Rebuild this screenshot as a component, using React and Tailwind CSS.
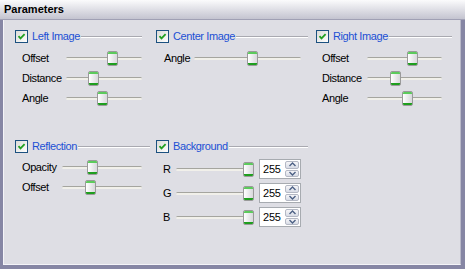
import React from "react";

const F = "font-['Liberation_Sans',Arial,sans-serif]";

function Check() {
  return (
    <div className="w-[13px] h-[13px] shrink-0 border border-[#1c5180] bg-gradient-to-br from-[#dcdcd7] to-white flex items-center justify-center">
      <svg width="9" height="9" viewBox="0 0 9 9">
        <path d="M1.5 4.2 L3.5 6.4 L7.6 2.2" fill="none" stroke="#21a121" strokeWidth="1.8" />
      </svg>
    </div>
  );
}

function Header({ label, w }) {
  return (
    <div className="flex items-center h-[13px]" style={{ width: w }}>
      <Check />
      <span className="ml-[4px] text-[11px] tracking-[-0.4px] text-[#1c50d4] leading-none whitespace-nowrap">{label}</span>
      <div className="flex-1 ml-[1px] h-[2px] border-t border-[#a9a9b0] border-b-[1px] border-b-white" />
    </div>
  );
}

function Thumb({ left }) {
  return (
    <div
      className="absolute top-[3px] w-[11px] h-[15px] rounded-[2px] border border-[#9a9a9a] bg-gradient-to-r from-white to-[#d8d8dc] flex flex-col justify-between overflow-hidden"
      style={{ left }}
    >
      <div className="h-[2px] bg-[#5ccb5c]" />
      <div className="h-[2px] bg-[#1e9e1e]" />
    </div>
  );
}

function Slider({ w, pos }) {
  return (
    <div className="relative h-[20px] shrink-0" style={{ width: w }}>
      <div className="absolute left-0 right-0 top-[9px] h-[3px] rounded-full border-t border-[#a5a59f] bg-[#f1f0ea]" />
      <Thumb left={pos} />
    </div>
  );
}

function Row({ label, pl, lw, sw, pos }) {
  return (
    <div className="flex items-center h-[20px]" style={{ paddingLeft: pl }}>
      <span className="text-[11px] tracking-[-0.4px] text-black leading-none shrink-0" style={{ width: lw }}>
        {label}
      </span>
      <Slider w={sw} pos={pos} />
    </div>
  );
}

function Spin() {
  return (
    <div className="w-[42px] h-[20px] border border-[#a7abb0] bg-white flex items-stretch">
      <span className="flex-1 pl-[3px] text-[11px] leading-[18px] text-black tracking-[-0.2px]">255</span>
      <div className="w-[15px] flex flex-col gap-[1px] py-[1px] pr-[1px]">
        <div className="flex-1 rounded-[2px] border border-[#b4b8c4] bg-gradient-to-b from-[#f6f6f8] to-[#d8dce6] flex items-center justify-center">
          <svg width="7" height="5" viewBox="0 0 7 5">
            <path d="M0.5 4 L3.5 1 L6.5 4" fill="none" stroke="#4d6185" strokeWidth="1.4" />
          </svg>
        </div>
        <div className="flex-1 rounded-[2px] border border-[#b4b8c4] bg-gradient-to-b from-[#f6f6f8] to-[#d8dce6] flex items-center justify-center">
          <svg width="7" height="5" viewBox="0 0 7 5">
            <path d="M0.5 1 L3.5 4 L6.5 1" fill="none" stroke="#4d6185" strokeWidth="1.4" />
          </svg>
        </div>
      </div>
    </div>
  );
}

function BgRow({ label }) {
  return (
    <div className="flex items-center h-[20px] pl-[7px]">
      <span className="w-[13px] text-[11px] leading-none text-black shrink-0">{label}</span>
      <Slider w={78} pos={67} />
      <div className="ml-[5px]">
        <Spin />
      </div>
    </div>
  );
}

export default function App() {
  return (
    <div className={`w-[465px] h-[269px] flex flex-col bg-[#8686a4] ${F}`}>
      <div className="h-[20px] shrink-0 bg-gradient-to-b from-[#fbfbfc] to-[#c4c4d0] border-b border-[#a0a0b4] pl-[4px] flex items-center">
        <span className="text-[11px] font-bold text-black leading-none">Parameters</span>
      </div>
      <div className="flex-1 flex pl-[3px] pr-[4px] pb-[4px]">
        <div className="flex-1 bg-[#dedee4] border-l border-b border-[#f4f4f8] border-r border-r-[#b9b9c9] pl-[11px] pt-[10px]">
          <div className="flex">
            <div className="w-[141px] flex flex-col">
              <Header label="Left Image" w={127} />
              <div className="mt-[5px]">
                <Row label="Offset" pl={7} lw={44} sw={76} pos={41} />
                <Row label="Distance" pl={7} lw={44} sw={76} pos={22} />
                <Row label="Angle" pl={7} lw={44} sw={76} pos={31} />
              </div>
            </div>
            <div className="w-[160px] flex flex-col">
              <Header label="Center Image" w={152} />
              <div className="mt-[5px]">
                <Row label="Angle" pl={8} lw={30} sw={107} pos={53} />
              </div>
            </div>
            <div className="w-[136px] flex flex-col">
              <Header label="Right Image" w={136} />
              <div className="mt-[5px]">
                <Row label="Offset" pl={6} lw={45} sw={75} pos={40} />
                <Row label="Distance" pl={6} lw={45} sw={75} pos={23} />
                <Row label="Angle" pl={6} lw={45} sw={75} pos={35} />
              </div>
            </div>
          </div>
          <div className="flex mt-[32px]">
            <div className="w-[141px] flex flex-col">
              <Header label="Reflection" w={135} />
              <div className="mt-[4px]">
                <Row label="Opacity" pl={7} lw={40} sw={80} pos={25} />
                <Row label="Offset" pl={7} lw={40} sw={80} pos={23} />
              </div>
            </div>
            <div className="w-[160px] flex flex-col">
              <Header label="Background" w={152} />
              <div className="mt-[6px] flex flex-col gap-[4px]">
                <BgRow label="R" />
                <BgRow label="G" />
                <BgRow label="B" />
              </div>
            </div>
          </div>
        </div>
      </div>
    </div>
  );
}
